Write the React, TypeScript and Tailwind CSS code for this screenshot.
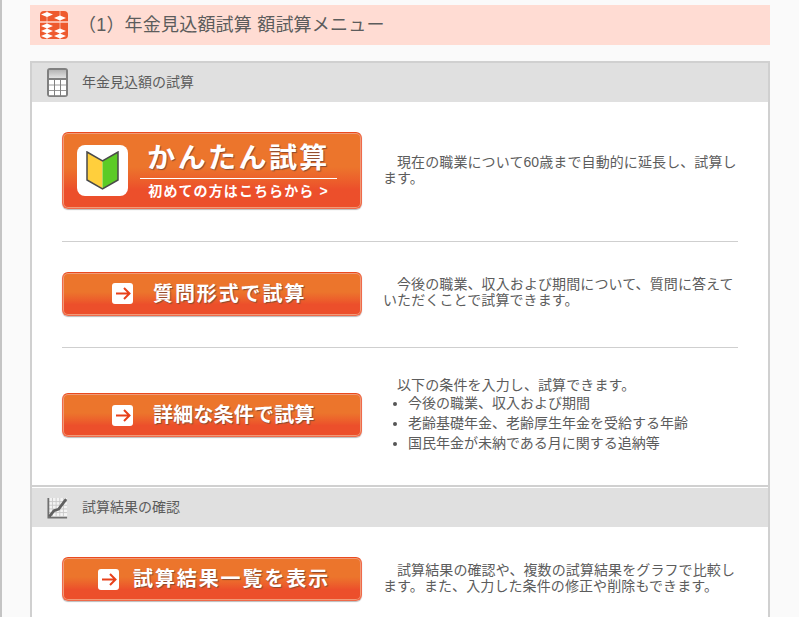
import React from 'react';

const font = { fontFamily: '"Liberation Sans", "Noto Sans CJK JP", sans-serif' };

const btnSkin = 'rounded-[6px] border border-[#ef6a4a] border-t-[#ea4a1e] bg-gradient-to-b from-[#ec752c] from-45% to-[#ec4f2b] to-75% shadow-[inset_0_0_0_1px_#f19a78,0_1px_1px_#bbb]';

const ArrowBox = () => (
  <svg width="21" height="21" viewBox="0 0 21 21" className="shrink-0">
    <rect width="21" height="21" rx="3" fill="#fff" />
    <path d="M4 10.500h13M12 5l5.500 5.500-5.500 5.500" fill="none" stroke="#e8401a" strokeWidth="2" />
  </svg>
);

const OrangeButton = ({ label, pad, gap, tracking }: { label: string; pad: string; gap: string; tracking: string }) => (
  <a className={`flex h-[44px] w-[300px] shrink-0 items-center ${pad} ${gap} ${btnSkin}`}>
    <ArrowBox />
    <span className={`text-[20px] leading-none font-bold ${tracking} text-white [text-shadow:1px_1px_1px_#8a4a30]`}>{label}</span>
  </a>
);

const SectionHeader = ({ icon, title }: { icon: React.ReactNode; title: string }) => (
  <div className="flex h-[39px] items-center bg-[#e0e0e0] pl-[15px]">
    <span className="flex w-[21px] justify-center">{icon}</span>
    <span className="ml-[14px] text-[14px] text-[#5c5c5c]">{title}</span>
  </div>
);

const Row = ({ children, button, className }: { children: React.ReactNode; button: React.ReactNode; className?: string }) => (
  <div className={`flex items-center gap-[21px] ${className ?? ''}`}>
    {button}
    <div className="w-[355px] text-[14px] leading-[16px] tracking-[0.1px] text-[#5c5c5c]">{children}</div>
  </div>
);

// そろばん
const Abacus = () => (
  <svg width="28" height="28" viewBox="0 0 28 28">
    <rect width="28" height="28" rx="4" fill="#ee5a2e" />
    <path d="M7 0v28M20 0v28" stroke="#fff" strokeWidth="1" opacity="0.55" />
    <path d="M0 11h28" stroke="#ffd9cc" strokeWidth="1.500" />
    <path d="M1 3.500l6-2.500 6 2.500-6 2.500zM14 7l6-2.500 6 2.500-6 2.500zM1 15l6-2.500 6 2.500-6 2.500zM1 20l6-2.500 6 2.500-6 2.500zM1 25l6-2.500 6 2.500-6 2.500zM14 20l6-2.500 6 2.500-6 2.500zM14 25l6-2.500 6 2.500-6 2.500z" fill="#fff" />
  </svg>
);

const Calculator = () => (
  <svg width="21" height="29" viewBox="0 0 21 29">
    <defs>
      <linearGradient id="calc" x1="0" y1="0" x2="0" y2="1">
        <stop offset="0" stopColor="#b4b4b4" />
        <stop offset="1" stopColor="#e2e2e2" />
      </linearGradient>
    </defs>
    <rect width="21" height="29" rx="3" fill="#808080" />
    <rect x="2" y="2" width="17" height="8" fill="url(#calc)" />
    <g fill="#fff">
      <rect x="2" y="12" width="5" height="4.600" /><rect x="8" y="12" width="5" height="4.600" /><rect x="14" y="12" width="5" height="4.600" />
      <rect x="2" y="17.400" width="5" height="4.600" /><rect x="8" y="17.400" width="5" height="4.600" /><rect x="14" y="17.400" width="5" height="4.600" />
      <rect x="2" y="22.800" width="5" height="4.400" /><rect x="8" y="22.800" width="5" height="4.400" /><rect x="14" y="22.800" width="5" height="4.400" />
    </g>
  </svg>
);

const ChartIcon = () => (
  <svg width="23" height="24" viewBox="0 0 23 24">
    <rect x="2" y="1" width="20" height="20" fill="#f4f4f4" />
    <path d="M6 1v20M10 1v20M14 1v20M18 1v20M2 5h20M2 9h20M2 13h20M2 17h20" stroke="#c8c8c8" strokeWidth="1" />
    <path d="M1.500 1v21.500H22" fill="none" stroke="#707070" strokeWidth="2" />
    <path d="M2.500 21.500L7.700 15l5-1.700L21 2.300" fill="none" stroke="#606060" strokeWidth="3" />
  </svg>
);

const Wakaba = () => (
  <svg width="33" height="39" viewBox="0 0 33 39" className="shrink-0">
    <path d="M1 1l15.500 9v28L1 29z" fill="#ffcf3c" />
    <path d="M32 1l-15.500 9v28L32 29z" fill="#5ccb26" />
    <path d="M1 1l15.500 9L32 1v28l-15.500 9L1 29z" fill="none" stroke="#4a4a4a" strokeWidth="1.500" />
  </svg>
);

export default function App() {
  return (
    <div style={font} className="h-[617px] overflow-hidden border-l-2 border-[#c4c4c4] bg-[#fafafa] pt-[5px] pl-[28px]">
      <div className="flex h-[40px] w-[740px] items-center bg-[#ffdcd3] pl-[10px]">
        <Abacus />
        <h1 className="ml-[10px] text-[18px] tracking-[0.2px] text-[#5c5c5c]">（1）年金見込額試算 額試算メニュー</h1>
      </div>

      <div className="mt-[16px] w-[740px] border-2 border-b-0 border-[#d0d0d0] bg-white">
        <SectionHeader icon={<Calculator />} title="年金見込額の試算" />

        <div className="px-[30px]">
          <Row
            className="h-[140px] border-b border-[#cfcfcf] pb-[2px]"
            button={
              <a className={`flex h-[77px] w-[300px] shrink-0 items-center pl-[14px] ${btnSkin}`}>
                <span className="flex size-[51px] items-center justify-center rounded-[8px] bg-white"><Wakaba /></span>
                <span className="ml-[12px] flex w-[197px] flex-col items-center text-white">
                  <span className="pb-[1px] text-[28px] leading-[36px] font-bold tracking-[2.400px] [text-shadow:1px_1px_1px_#8a4a30]">かんたん試算</span>
                  <span className="w-full border-t border-white pt-[2px] text-center text-[14px] leading-[20px] font-bold tracking-[1.100px]">初めての方はこちらから &gt;</span>
                </span>
              </a>
            }
          >
            <p className="indent-[14px] pb-[1px]">現在の職業について60歳まで自動的に延長し、試算します。</p>
          </Row>

          <Row
            className="h-[106px] border-b border-[#cfcfcf] pb-[2px]"
            button={<OrangeButton label="質問形式で試算" pad="pl-[49px]" gap="gap-[20px]" tracking="tracking-[1.900px]" />}
          >
            <p className="indent-[14px] pb-[4px]">今後の職業、収入および期間について、質問に答えていただくことで試算できます。</p>
          </Row>

          <Row
            className="h-[137px] pb-[3px]"
            button={<OrangeButton label="詳細な条件で試算" pad="pl-[49px]" gap="gap-[20px]" tracking="tracking-[0.200px]" />}
          >
            <p className="indent-[14px]">以下の条件を入力し、試算できます。</p>
            <ul className="list-disc pl-[25px] leading-[20px] tracking-normal marker:text-[#555]">
              <li>今後の職業、収入および期間</li>
              <li>老齢基礎年金、老齢厚生年金を受給する年齢</li>
              <li>国民年金が未納である月に関する追納等</li>
            </ul>
          </Row>
        </div>

        <div className="border-t-2 border-[#d0d0d0] pt-[1px]">
          <SectionHeader icon={<ChartIcon />} title="試算結果の確認" />
        </div>

        <div className="px-[30px]">
          <Row
            className="h-[104px]"
            button={<OrangeButton label="試算結果一覧を表示" pad="pl-[35px]" gap="gap-[14px]" tracking="tracking-[1.900px]" />}
          >
            <p className="indent-[14px] pb-[3px]">試算結果の確認や、複数の試算結果をグラフで比較します。また、入力した条件の修正や削除もできます。</p>
          </Row>
        </div>
      </div>
    </div>
  );
}
